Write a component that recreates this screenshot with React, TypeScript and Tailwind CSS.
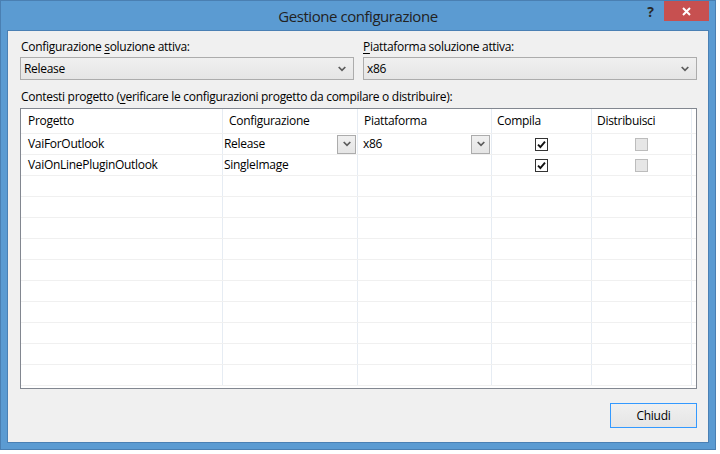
import React from "react";

function Chevron() {
  return (
    <svg width="8" height="6" viewBox="0 0 8 6" className="block">
      <path d="M0.7 1 L4 4.4 L7.3 1" stroke="#5c5c5c" strokeWidth="1.7" fill="none" />
    </svg>
  );
}

function Check() {
  return (
    <div className="w-[13px] h-[13px] border border-[#333333] bg-white flex items-center justify-center">
      <svg width="9" height="9" viewBox="0 0 9 9" className="block">
        <path d="M1 4.6 L3.4 7 L8 1.6" stroke="#111" strokeWidth="1.9" fill="none" />
      </svg>
    </div>
  );
}

function DisabledBox() {
  return <div className="w-[13px] h-[13px] border border-[#bcbcbc] bg-[#e6e6e6]" />;
}

function CellButton() {
  return (
    <div className="w-[19px] h-[19px] border border-[#acacac] bg-gradient-to-b from-[#f0f0f0] to-[#e5e5e5] flex items-center justify-center">
      <Chevron />
    </div>
  );
}

type Row = { p: string; c: string; pl: string; dd: boolean; comp: boolean };

const rows: Row[] = [
  { p: "VaiForOutlook", c: "Release", pl: "x86", dd: true, comp: true },
  { p: "VaiOnLinePluginOutlook", c: "SingleImage", pl: "", dd: false, comp: true },
];
for (let i = 0; i < 10; i++) rows.push({ p: "", c: "", pl: "", dd: false, comp: false });

const vline = "border-r border-[#e6ecf3]";

export default function App() {
  return (
    <div className="w-[720px] h-[454px] bg-white font-['Open_Sans','Noto_Sans',sans-serif] text-[12px] leading-[16px] tracking-[-0.3px] text-[#000]">
      <div className="w-[716px] h-[450px] border border-[#4a7fb2] bg-[#5b9bd2] flex flex-col">
        {/* title bar */}
        <div className="h-[29px] relative flex items-start justify-end pr-[6px]">
          <div className="absolute inset-x-0 top-[5px] text-center text-[15px] leading-[20px] tracking-[-0.45px] text-[#222]">
            Gestione configurazione
          </div>
          <div className="relative w-[27px] h-[20px] flex items-center justify-center text-[14px] font-bold text-[#2a2a2a] leading-[20px] pt-[1px]">
            ?
          </div>
          <div className="relative w-[45px] h-[20px] bg-[#c75050] flex items-center justify-center">
            <svg width="9" height="9" viewBox="0 0 9 9" className="block">
              <path d="M1 1 L8 8 M8 1 L1 8" stroke="#fff" strokeWidth="2" />
            </svg>
          </div>
        </div>
        {/* client */}
        <div className="mx-[6px] h-[413px] border border-[#4a80b4] bg-[#f0f0f0] flex flex-col pl-[12px] pr-[11px] pt-[8px]">
          <div className="grid grid-cols-[334px_334px] gap-x-[9px]">
            <div className="flex flex-col">
              <div className="pl-[1px] h-[16px] mb-[2px] text-[#000]">
                Configurazione <span className="underline underline-offset-2">s</span>oluzione attiva:
              </div>
              <div className="h-[23px] border border-[#acacac] bg-gradient-to-b from-[#f0f0f0] to-[#e5e5e5] flex items-center justify-between pl-[3px] pr-[7px]">
                <span>Release</span>
                <Chevron />
              </div>
            </div>
            <div className="flex flex-col">
              <div className="h-[16px] mb-[2px]">
                <span className="underline underline-offset-2">P</span>iattaforma soluzione attiva:
              </div>
              <div className="h-[23px] border border-[#acacac] bg-gradient-to-b from-[#f0f0f0] to-[#e5e5e5] flex items-center justify-between pl-[3px] pr-[7px]">
                <span>x86</span>
                <Chevron />
              </div>
            </div>
          </div>
          <div className="mt-[9px] h-[16px] pl-[1px]">
            Contesti progetto (<span className="underline underline-offset-2">v</span>erificare le configurazioni progetto da compilare o distribuire):
          </div>
          {/* grid */}
          <div className="mt-[3px] h-[281px] border border-[#828790] bg-white flex flex-col">
            <div className="flex h-[25px] border-b border-[#f0f0f0]">
              <div className={`w-[202px] ${vline} pl-[7px] flex items-center`}>Progetto</div>
              <div className={`w-[135px] ${vline} pl-[6px] flex items-center`}>Configurazione</div>
              <div className={`w-[134px] ${vline} pl-[6px] flex items-center`}>Piattaforma</div>
              <div className={`w-[100px] ${vline} pl-[5px] flex items-center`}>Compila</div>
              <div className={`w-[100px] ${vline} pl-[5px] flex items-center`}>Distribuisci</div>
              <div className="flex-1" />
            </div>
            {rows.map((r, i) => (
              <div key={i} className="flex h-[21px] border-b border-[#f0f0f0]">
                <div className={`w-[202px] ${vline} pl-[7px] flex items-center`}>{r.p}</div>
                <div className={`w-[135px] ${vline} pl-[1px] pr-[1px] flex items-center justify-between`}>
                  <span>{r.c}</span>
                  {r.dd && <CellButton />}
                </div>
                <div className={`w-[134px] ${vline} pl-[5px] pr-[1px] flex items-center justify-between`}>
                  <span>{r.pl}</span>
                  {r.dd && <CellButton />}
                </div>
                <div className={`w-[100px] ${vline} flex items-center justify-center`}>
                  {r.comp && <Check />}
                </div>
                <div className={`w-[100px] ${vline} flex items-center justify-center`}>
                  {r.comp && <DisabledBox />}
                </div>
                <div className="flex-1" />
              </div>
            ))}
          </div>
          <div className="mt-[14px] flex justify-end">
            <div className="w-[87px] h-[25px] border border-[#3399ff] bg-gradient-to-b from-[#f0f0f0] to-[#e5e5e5] flex items-center justify-center">
              Chiudi
            </div>
          </div>
        </div>
      </div>
    </div>
  );
}
